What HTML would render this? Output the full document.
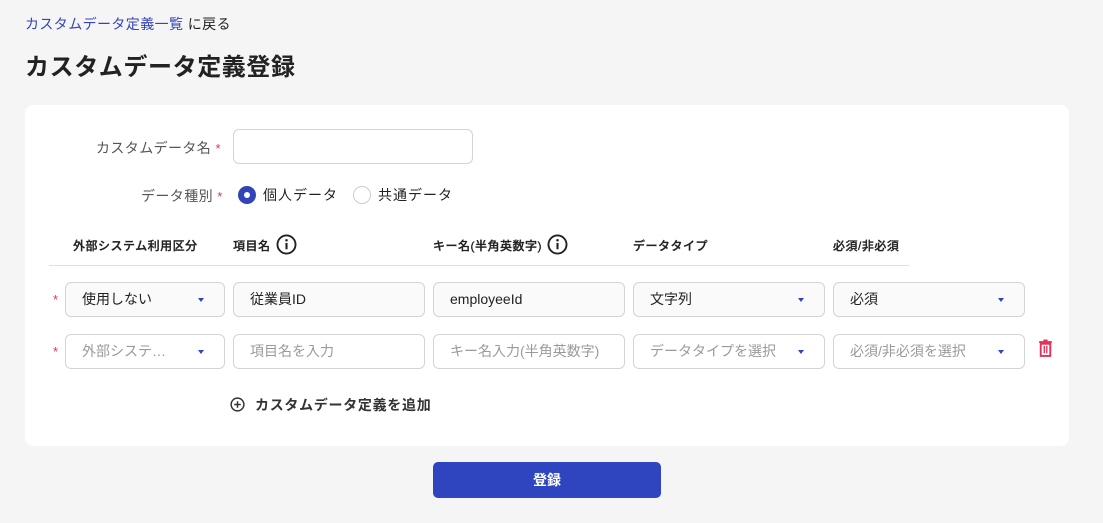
<!DOCTYPE html>
<html><head><meta charset="utf-8"><style>
*{box-sizing:border-box;margin:0;padding:0}
body{width:1103px;height:523px;background:#f5f5f5;font-family:"Liberation Sans","Noto Sans CJK JP",sans-serif;color:#222;position:relative;overflow:hidden}
.a{position:absolute;white-space:nowrap}
.card{position:absolute;left:25px;top:105px;width:1044px;height:341px;background:#fff;border-radius:8px}
.box{position:absolute;height:35px;border:1px solid #d4d4d4;border-radius:6px;font-size:14px;line-height:33px;padding-left:16px;background:#fff}
.f{background:#fafafa}
.ph{color:#9a9a9a}
.arr{position:absolute;right:20px;top:15px;width:0;height:0;border-left:3.5px solid transparent;border-right:3.5px solid transparent;border-top:4px solid #3344bb}
.st{color:#e0325a;font-size:13px}
.h{font-size:12px;font-weight:500;color:#222;top:237px;letter-spacing:0.5px;-webkit-text-stroke:0.3px #222}
</style></head><body>
<div class="a" style="left:25px;top:14px;font-size:14px;letter-spacing:0.4px;color:#3344bb">カスタムデータ定義一覧 <span style="color:#222">に戻る</span></div>
<div class="a" style="left:25px;top:47px;font-size:24px;letter-spacing:0.6px;font-weight:bold;color:#222">カスタムデータ定義登録</div>
<div class="card"></div>
<div class="a" style="left:96px;top:138px;font-size:14px;letter-spacing:0.4px;color:#555">カスタムデータ名 <span class="st">*</span></div>
<div class="box" style="left:233px;top:129px;width:240px"></div>
<div class="a" style="left:141px;top:186px;font-size:14px;letter-spacing:0.4px;color:#555">データ種別 <span class="st">*</span></div>
<div class="a" style="left:238px;top:186px;width:18px;height:18px;border-radius:50%;background:#3344bb"></div>
<div class="a" style="left:244px;top:192px;width:6px;height:6px;border-radius:50%;background:#fff"></div>
<div class="a" style="left:263px;top:185px;font-size:14px;letter-spacing:1px">個人データ</div>
<div class="a" style="left:353px;top:186px;width:18px;height:18px;border-radius:50%;border:1px solid #ccc"></div>
<div class="a" style="left:378px;top:185px;font-size:14px;letter-spacing:1px">共通データ</div>
<div class="a h" style="left:73px">外部システム利用区分</div>
<div class="a h" style="left:233px">項目名</div>
<svg class="a" style="left:276px;top:234px" width="21" height="21" viewBox="0 0 20 20"><circle cx="10" cy="10" r="8.6" fill="none" stroke="#222" stroke-width="1.8"/><rect x="9" y="8.5" width="2" height="6" fill="#222"/><circle cx="10" cy="6" r="1.2" fill="#222"/></svg>
<div class="a h" style="left:433px">キー名(半角英数字)</div>
<svg class="a" style="left:547px;top:234px" width="21" height="21" viewBox="0 0 20 20"><circle cx="10" cy="10" r="8.6" fill="none" stroke="#222" stroke-width="1.8"/><rect x="9" y="8.5" width="2" height="6" fill="#222"/><circle cx="10" cy="6" r="1.2" fill="#222"/></svg>
<div class="a h" style="left:633px">データタイプ</div>
<div class="a h" style="left:833px">必須/非必須</div>
<div class="a" style="left:49px;top:265px;width:860px;height:1px;background:#e0e0e0"></div>

<div class="a st" style="left:53px;top:292px">*</div>
<div class="box f" style="left:65px;top:282px;width:160px">使用しない<span class="arr"></span></div>
<div class="box f" style="left:233px;top:282px;width:192px">従業員ID</div>
<div class="box f" style="left:433px;top:282px;width:192px">employeeId</div>
<div class="box f" style="left:633px;top:282px;width:192px">文字列<span class="arr"></span></div>
<div class="box f" style="left:833px;top:282px;width:192px">必須<span class="arr"></span></div>

<div class="a st" style="left:53px;top:344px">*</div>
<div class="box ph" style="left:65px;top:334px;width:160px">外部システ…<span class="arr"></span></div>
<div class="box ph" style="left:233px;top:334px;width:192px">項目名を入力</div>
<div class="box ph" style="left:433px;top:334px;width:192px">キー名入力(半角英数字)</div>
<div class="box ph" style="left:633px;top:334px;width:192px">データタイプを選択<span class="arr"></span></div>
<div class="box ph" style="left:833px;top:334px;width:192px">必須/非必須を選択<span class="arr"></span></div>
<svg class="a" style="left:1038px;top:339px" width="15" height="18" viewBox="0 0 14 17"><rect x="1" y="2" width="12" height="1.8" fill="#e0325a"/><rect x="5" y="0.5" width="4" height="2" fill="#e0325a"/><rect x="2.5" y="4.5" width="9" height="11.5" fill="none" stroke="#e0325a" stroke-width="1.8"/><rect x="5.2" y="6.5" width="1.3" height="7" fill="#e0325a"/><rect x="7.6" y="6.5" width="1.3" height="7" fill="#e0325a"/></svg>

<svg class="a" style="left:230px;top:397px" width="15" height="15" viewBox="0 0 16 16"><circle cx="8" cy="8" r="6.8" fill="none" stroke="#333" stroke-width="1.6"/><path d="M8 4.5v7M4.5 8h7" stroke="#333" stroke-width="1.6"/></svg>
<div class="a" style="left:255px;top:395px;font-size:14px;letter-spacing:0.7px;font-weight:bold;color:#333">カスタムデータ定義を追加</div>

<div class="a" style="left:433px;top:462px;width:228px;height:36px;background:#2f45c0;border-radius:5px;color:#fff;font-weight:bold;font-size:14px;text-align:center;line-height:36px">登録</div>
</body></html>
